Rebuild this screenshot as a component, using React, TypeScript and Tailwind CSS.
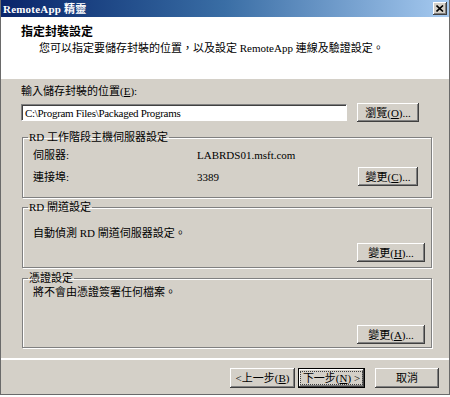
import React from 'react';

const FONT = "font-['Liberation_Serif','Noto_Sans_CJK_TC',serif]";

function Btn({ children, className = '' }: { children: React.ReactNode; className?: string }) {
  return (
    <div
      className={`h-[19px] bg-[#d4d0c8] shadow-[inset_-1px_-1px_#404040,inset_1px_1px_#ffffff,inset_-2px_-2px_#808080] text-[11px] leading-[14px] text-black flex items-center justify-center ${className}`}
    >
      {children}
    </div>
  );
}

function Group({
  title,
  children,
  className = '',
  bodyClass = '',
}: {
  title: string;
  children: React.ReactNode;
  className?: string;
  bodyClass?: string;
}) {
  return (
    <fieldset
      className={`ml-[1px] w-[410px] border border-[#808080] shadow-[1px_1px_0_#ffffff,inset_1px_1px_0_#ffffff] ${className}`}
    >
      <legend className="ml-[5px] px-[1px] text-[11px] leading-[14px]">{title}</legend>
      <div className={bodyClass}>{children}</div>
    </fieldset>
  );
}

export default function App() {
  return (
    <div className={`w-[450px] h-[397px] bg-white ${FONT}`}>
      <div className="w-[450px] h-[395px] bg-[#d4d0c8] flex flex-col border-x border-b border-[#6a6a6a] text-black">
        {/* title bar */}
        <div className="h-[17px] flex items-center bg-gradient-to-r from-[#0a246a] via-[#3a6ea5] to-[#a6caf0] pl-[2px] pr-[2px]">
          <span className="text-white font-bold text-[11px] leading-[14px] tracking-[0.2px]">RemoteApp 精靈</span>
          <div className="ml-auto w-[14px] h-[13px] bg-[#d4d0c8] shadow-[inset_-1px_-1px_#404040,inset_1px_1px_#ffffff,inset_-2px_-2px_#808080] flex items-center justify-center">
            <svg width="8" height="7" viewBox="0 0 8 7">
              <path d="M0.5 0.5 L7 6.5 M7 0.5 L0.5 6.5" stroke="#000" strokeWidth="1.6" />
            </svg>
          </div>
        </div>

        {/* header */}
        <div className="h-[60px] bg-white pl-[20px] pt-[8px]">
          <div className="text-[12px] leading-[14px] font-bold">指定封裝設定</div>
          <div className="mt-[2px] pl-[18px] text-[11px] leading-[14px]">
            您可以指定要儲存封裝的位置，以及設定 RemoteApp 連線及驗證設定。
          </div>
        </div>
        <div className="h-[2px] border-t border-[#808080] border-b border-white" />

        {/* body */}
        <div className="flex-1 flex flex-col px-[20px]">
          <div className="mt-[5px] text-[11px] leading-[14px]">
            輸入儲存封裝的位置(<span className="underline">E</span>):
          </div>
          <div className="mt-[5px] flex items-center">
            <div className="w-[326px] h-[17px] bg-white border border-t-[#808080] border-l-[#808080] border-b-white border-r-white shadow-[inset_1px_1px_#404040] flex items-center pl-[3px] text-[11px] leading-[14px] tracking-[-0.3px]">
              C:\Program Files\Packaged Programs
            </div>
            <Btn className="ml-[10px] w-[62px]">
              瀏覽(<span className="underline">O</span>)...
            </Btn>
          </div>

          <Group title="RD 工作階段主機伺服器設定" className="mt-[8px]" bodyClass="pl-[10px] pr-[13px] pb-[11px]">
            <div className="mt-[4px] flex text-[11px] leading-[14px]">
              <div className="w-[164px]">伺服器:</div>
              <div>LABRDS01.msft.com</div>
            </div>
            <div className="mt-[5px] flex items-center text-[11px] leading-[14px]">
              <div className="w-[164px]">連接埠:</div>
              <div>3389</div>
              <Btn className="ml-auto w-[60px]">
                變更(<span className="underline">C</span>)...
              </Btn>
            </div>
          </Group>

          <Group title="RD 閘道設定" className="mt-[2px]" bodyClass="pl-[10px] pr-[6px] pb-[5px]">
            <div className="mt-[12px] text-[11px] leading-[14px]">自動偵測 RD 閘道伺服器設定。</div>
            <div className="mt-[3px] flex justify-end">
              <Btn className="w-[68px]">
                變更(<span className="underline">H</span>)...
              </Btn>
            </div>
          </Group>

          <Group title="憑證設定" className="mt-[3px]" bodyClass="pl-[10px] pr-[6px] pb-[3px]">
            <div className="text-[11px] leading-[14px]">將不會由憑證簽署任何檔案。</div>
            <div className="mt-[26px] flex justify-end">
              <Btn className="w-[68px]">
                變更(<span className="underline">A</span>)...
              </Btn>
            </div>
          </Group>
        </div>

        {/* footer */}
        <div className="h-[2px] border-t border-[#808080] border-b border-white" />
        <div className="h-[34px] flex items-start justify-end pt-[8px] pr-[10px]">
          <Btn className="w-[65px] h-[20px]">
            &lt;上一步(<span className="underline">B</span>)
          </Btn>
          <div className="ml-[3px] w-[67px] h-[20px] border border-black">
            <Btn className="w-full h-full">
              <span className="border border-dotted border-[#404040] px-[2px] leading-[12px]">
                下一步(<span className="underline">N</span>) &gt;
              </span>
            </Btn>
          </div>
          <Btn className="ml-[10px] w-[64px] h-[20px]">取消</Btn>
        </div>
      </div>
    </div>
  );
}
